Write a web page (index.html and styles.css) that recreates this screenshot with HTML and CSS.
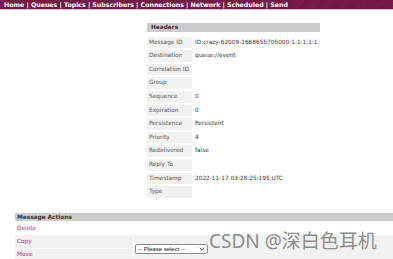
FILE: index.html
```html
<!DOCTYPE html>
<html>
<head>
<meta charset="utf-8">
<link rel="stylesheet" href="styles.css">
</head>
<body>
<div class="nav">Home | Queues | Topics | Subscribers | Connections | Network | Scheduled | Send</div>
<div class="headers">
  <div class="hd">Headers</div>
  <div class="lbl">Message ID</div><div class="val">ID:crazy-62009-1668655705000-1:1:1:1:1</div>
  <div class="lbl">Destination</div><div class="val">queue://event</div>
  <div class="lbl">Correlation ID</div><div class="val"></div>
  <div class="lbl">Group</div><div class="val"></div>
  <div class="lbl">Sequence</div><div class="val">0</div>
  <div class="lbl">Expiration</div><div class="val">0</div>
  <div class="lbl">Persistence</div><div class="val">Persistent</div>
  <div class="lbl">Priority</div><div class="val">4</div>
  <div class="lbl">Redelivered</div><div class="val">false</div>
  <div class="lbl">Reply To</div><div class="val"></div>
  <div class="lbl">Timestamp</div><div class="val">2022-11-17 03:28:25:195 UTC</div>
  <div class="lbl">Type</div><div class="val"></div>
</div>
<div class="actions">
  <div class="ahd">Message Actions</div>
  <div class="act plain"><a>Delete</a></div><div class="blank"></div>
  <div class="act"><a>Copy</a></div>
  <div class="sel-cell">
    <div class="select">-- Please select --<svg width="6" height="4" viewBox="0 0 6 4"><path d="M0.8 0.8 L3 3 L5.2 0.8" fill="none" stroke="#333" stroke-width="0.9"/></svg></div>
  </div>
  <div class="act"><a>Move</a></div>
</div>
<div class="wm">CSDN @深白色耳机</div>
</body>
</html>
```
FILE: styles.css
```css
html, body {
  margin: 0;
  padding: 0;
  background: #fff;
  font-family: "DejaVu Sans", Verdana, sans-serif;
  font-size: 5.8px;
  color: #333;
  overflow: hidden;
}
.nav {
  height: 9px;
  line-height: 9px;
  background: repeating-linear-gradient(135deg, #7a1d4c 0 1px, #6e1742 1px 2px);
  color: #fff;
  font-weight: bold;
  font-size: 6.25px;
  padding-left: 4px;
  white-space: nowrap;
  border-bottom: 1px solid #d8c0cc;
}
.headers {
  margin: 13px 0 0 147px;
  width: max-content;
  display: grid;
  grid-template-columns: 45px auto;
  grid-auto-rows: 11.6px;
  row-gap: 2px;
}
.hd {
  grid-column: 1 / 3;
  height: 9px;
  line-height: 9px;
  background: #cccccc;
  font-weight: bold;
  padding-left: 4px;
  color: #333;
}
.lbl {
  background: #f1f1f1;
  line-height: 11.6px;
  padding-left: 2px;
  color: #555;
  white-space: nowrap;
}
.val {
  line-height: 11.6px;
  padding: 0 2px 0 3px;
  white-space: nowrap;
  color: #333;
}
.actions {
  margin: 15px 0 0 15px;
  display: grid;
  grid-template-columns: 118px 1fr;
  grid-template-rows: 8px 12px 13px 11px;
  row-gap: 1px;
  column-gap: 1px;
}
.ahd {
  grid-column: 1 / 3;
  background: #cccccc;
  font-weight: bold;
  line-height: 8px;
  padding-left: 2px;
}
.act {
  background: #f1f1f1;
  display: flex;
  align-items: center;
  padding-left: 2px;
}
.act.plain {
  background: #fff;
}
.act a {
  color: #a2307c;
}
.sel-cell {
  grid-row: 3 / 5;
  grid-column: 2;
  background: #f1f1f1;
  display: flex;
  align-items: center;
  padding-left: 1px;
  padding-top: 3px;
}
.select {
  width: 73px;
  height: 10px;
  box-sizing: border-box;
  border: 1px solid #8a8a8a;
  border-radius: 2px;
  background: #fff;
  color: #111;
  font-family: "Liberation Sans", Arial, sans-serif;
  font-size: 6px;
  display: flex;
  align-items: center;
  justify-content: space-between;
  padding: 0 2px;
}
.wm {
  position: absolute;
  left: 209px;
  top: 232px;
  line-height: 19px;
  font-family: "Noto Sans", "Noto Sans CJK SC", sans-serif;
  font-size: 19px;
  color: #8c8c8c;
  white-space: nowrap;
}
```
